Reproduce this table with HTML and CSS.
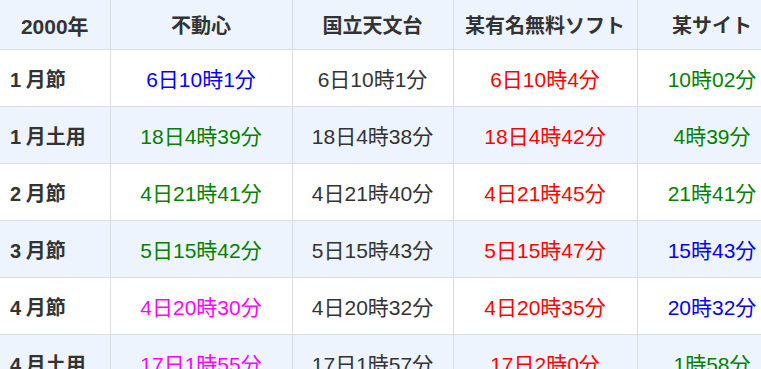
FILE: index.html
```html
<!DOCTYPE html>
<html lang="ja">
<head>
<meta charset="utf-8">
<title>2000年 節入り比較</title>
<link rel="stylesheet" href="styles.css">
</head>
<body>
<table class="cmp">
  <colgroup>
    <col class="c1"><col class="c2"><col class="c3"><col class="c4"><col class="c5">
  </colgroup>
  <thead>
    <tr><th class="year">2000年</th><th>不動心</th><th>国立天文台</th><th>某有名無料ソフト</th><th>某サイト</th></tr>
  </thead>
  <tbody>
    <tr><th>1 月節</th><td class="blue">6日10時1分</td><td>6日10時1分</td><td class="red">6日10時4分</td><td class="green">10時02分</td></tr>
    <tr class="alt"><th>1 月土用</th><td class="green">18日4時39分</td><td>18日4時38分</td><td class="red">18日4時42分</td><td class="green">4時39分</td></tr>
    <tr><th>2 月節</th><td class="green">4日21時41分</td><td>4日21時40分</td><td class="red">4日21時45分</td><td class="green">21時41分</td></tr>
    <tr class="alt"><th>3 月節</th><td class="green">5日15時42分</td><td>5日15時43分</td><td class="red">5日15時47分</td><td class="blue">15時43分</td></tr>
    <tr><th>4 月節</th><td class="magenta">4日20時30分</td><td>4日20時32分</td><td class="red">4日20時35分</td><td class="blue">20時32分</td></tr>
    <tr class="alt"><th>4 月土用</th><td class="magenta">17日1時55分</td><td>17日1時57分</td><td class="red">17日2時0分</td><td class="green">1時58分</td></tr>
  </tbody>
</table>
</body>
</html>
```
FILE: styles.css
```css
html, body {
  margin: 0;
  padding: 0;
  overflow: hidden;
  background: #fff;
}
.cmp {
  border-collapse: collapse;
  table-layout: fixed;
  width: 787px;
  font-family: "Liberation Sans", Arial, "Noto Sans CJK JP", sans-serif;
  color: #333;
}
.c1 { width: 110px; }
.c2 { width: 182px; }
.c3 { width: 161px; }
.c4 { width: 184px; }
.c5 { width: 150px; }
.cmp th, .cmp td {
  border: 1px solid #dcdcdc;
  padding: 0;
  text-align: center;
  vertical-align: middle;
  white-space: nowrap;
}
.cmp thead th {
  background: #edf4fd;
  height: 49px;
  font-size: 20px;
  font-weight: bold;
  border-top: none;
}
.cmp thead th.year { font-size: 21px; }
.cmp tr > :first-child { border-left: none; }
.cmp tbody th {
  text-align: left;
  padding-left: 10px;
  font-size: 20px;
  font-weight: bold;
  word-spacing: -1px;
}
.cmp tbody td, .cmp tbody th { height: 56px; }
.cmp tbody td { font-size: 21px; }
.cmp tr.alt { background: #edf4fd; }
.blue { color: #0000ff; }
.red { color: #ff0000; }
.green { color: #008000; }
.magenta { color: #ff00ff; }
```
